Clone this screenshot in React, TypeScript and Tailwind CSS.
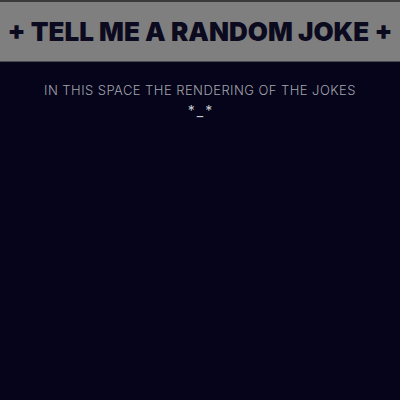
import React from 'react';

const App: React.FC = () => {
  return (
    <div
      className="min-h-screen w-full bg-[#05041a] flex flex-col"
      style={{ fontFamily: 'Inter, "Noto Sans", sans-serif' }}
    >
      {/* Header bar */}
      <header className="h-[62px] bg-[#7f7f80] border-t-2 border-t-[#3a3a3a] border-b border-b-[#4a4a55] flex items-center justify-center">
        <h1 className="text-[26px] font-black text-[#0b0a1e] tracking-[0px] leading-none whitespace-nowrap">
          + TELL ME A RANDOM JOKE +
        </h1>
      </header>

      {/* Jokes area */}
      <main className="flex flex-col items-center pt-[19px]">
        <p className="text-[13px] font-light text-[#a3a3ab] leading-[18px] tracking-[0.45px]">
          IN THIS SPACE THE RENDERING OF THE JOKES
        </p>
        <p className="mt-[5px] pl-[3px] text-[14px] text-[#c9c9d0] leading-[14px] tracking-[3px]">*_*</p>
      </main>
    </div>
  );
};

export default App;
